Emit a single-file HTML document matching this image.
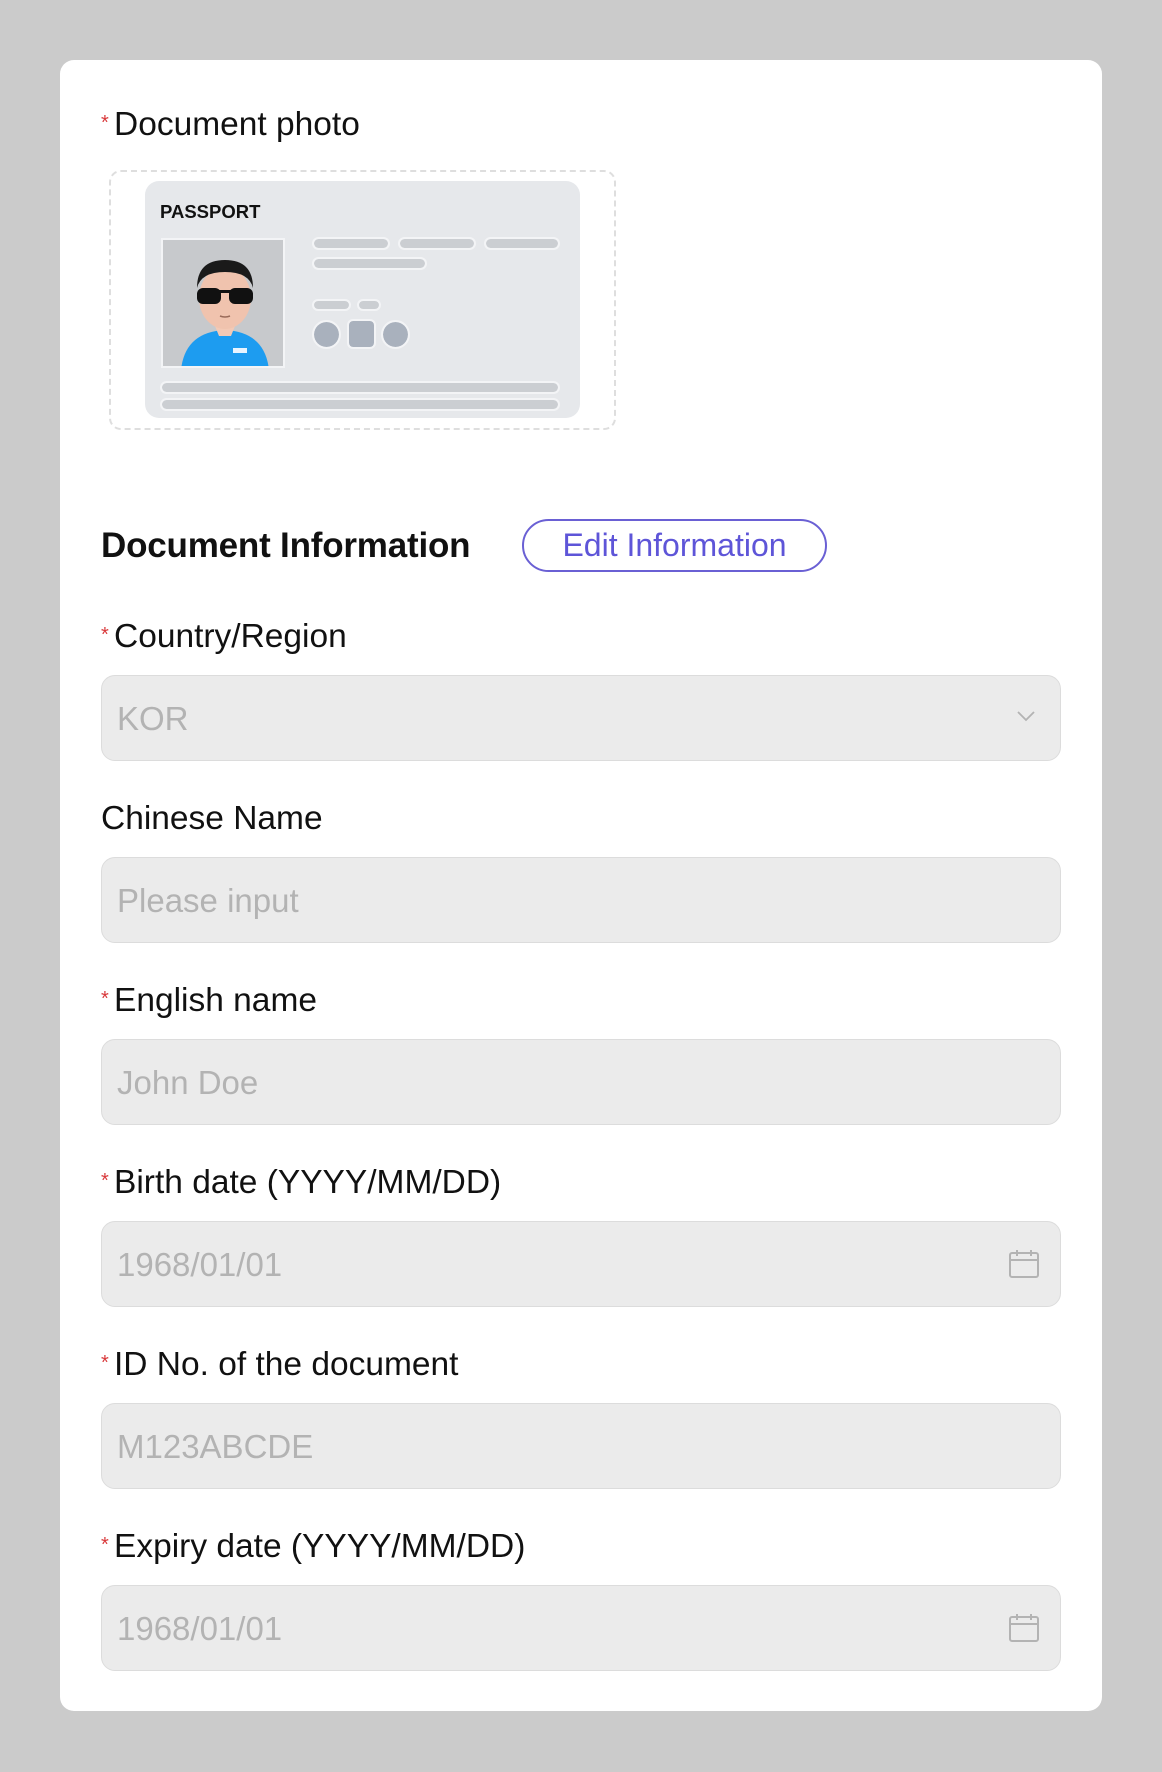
<!DOCTYPE html>
<html><head><meta charset="utf-8"><style>
*{margin:0;padding:0;box-sizing:border-box}
body{width:1162px;height:1772px;background:#cbcbcb;font-family:"Liberation Sans",sans-serif;position:relative;overflow:hidden}
.card{position:absolute;left:60px;top:60px;width:1042px;height:1651px;background:#fff;border-radius:14px}
.abs{position:absolute}
.lbl{position:absolute;left:114px;font-size:33.5px;color:#111;line-height:40px}
.req::before{content:"*";color:#d9383a;font-size:20px;position:absolute;left:-13px;top:-2px}
.inp{position:absolute;left:101px;width:960px;height:86px;background:#ebebeb;border:1.5px solid #dcdcdc;border-radius:14px;font-size:33px;color:#b3b3b3;padding-left:15px;line-height:86px}
.bar{position:absolute;background:#cbced2;border-radius:5px;height:9px;outline:2px solid #f3f4f6}
</style></head><body>
<div class="card"></div>
<div class="lbl req" style="top:105px">Document photo</div>
<div class="abs" style="left:109px;top:170px;width:507px;height:260px;border:2px dashed #dedede;border-radius:12px"></div>
<div class="abs" style="left:145px;top:181px;width:435px;height:237px;background:#e6e8eb;border-radius:14px"></div>
<div class="abs" style="left:160px;top:201px;font-size:18.5px;font-weight:bold;color:#111">PASSPORT</div>
<div class="abs" style="left:161px;top:238px;width:124px;height:130px;background:#c7c9cc;border:2px solid #f3f4f6;overflow:hidden">
<svg width="124" height="130" viewBox="0 0 124 130">
<path d="M18 130 Q22 92 62 90 Q102 92 106 130Z" fill="#1d9cf0"/>
<rect x="70" y="108" width="14" height="5" fill="#e8f4ff"/>
<path d="M52 86 L72 86 L68 96 L56 96Z" fill="#f3c9b5"/>
<ellipse cx="62" cy="58" rx="26" ry="31" fill="#f0c3ae"/>
<path d="M34 48 Q34 20 62 20 Q90 20 90 48 Q86 32 62 32 Q38 32 34 48Z" fill="#1a1a1a"/>
<rect x="34" y="48" width="24" height="16" rx="6" fill="#111"/>
<rect x="66" y="48" width="24" height="16" rx="6" fill="#111"/>
<rect x="56" y="50" width="12" height="3" fill="#111"/>
<path d="M57 76 Q62 78 67 76" stroke="#9a6b5a" stroke-width="1.5" fill="none"/>
</svg></div>
<div class="bar" style="left:314px;top:239px;width:74px"></div>
<div class="bar" style="left:400px;top:239px;width:74px"></div>
<div class="bar" style="left:486px;top:239px;width:72px"></div>
<div class="bar" style="left:314px;top:259px;width:111px"></div>
<div class="bar" style="left:314px;top:301px;width:35px;height:8px"></div>
<div class="bar" style="left:359px;top:301px;width:20px;height:8px"></div>
<div class="abs" style="left:314px;top:322px;width:25px;height:25px;border-radius:50%;background:#a9b1bd;outline:2px solid #f3f4f6"></div>
<div class="abs" style="left:349px;top:321px;width:25px;height:26px;border-radius:4px;background:#a9b1bd;outline:2px solid #f3f4f6"></div>
<div class="abs" style="left:383px;top:322px;width:25px;height:25px;border-radius:50%;background:#a9b1bd;outline:2px solid #f3f4f6"></div>
<div class="bar" style="left:162px;top:383px;width:396px"></div>
<div class="bar" style="left:162px;top:400px;width:396px"></div>

<div class="abs" style="left:101px;top:526px;font-size:35px;font-weight:bold;color:#111;line-height:40px;letter-spacing:-0.2px">Document Information</div>
<div class="abs" style="left:522px;top:519px;width:305px;height:53px;border:2px solid #6a60d4;border-radius:27px;color:#5e55d8;font-size:32px;text-align:center;line-height:49px">Edit Information</div>

<div class="lbl req" style="top:617px">Country/Region</div>
<div class="inp" style="top:675px">KOR
<svg class="abs" style="right:24px;top:34px" width="20" height="12" viewBox="0 0 20 12"><path d="M2 2 L10 10 L18 2" stroke="#b3b3b3" stroke-width="1.8" fill="none"/></svg></div>

<div class="lbl" style="left:101px;top:799px">Chinese Name</div>
<div class="inp" style="top:857px">Please input</div>

<div class="lbl req" style="top:981px">English name</div>
<div class="inp" style="top:1039px">John Doe</div>

<div class="lbl req" style="top:1163px">Birth date (YYYY/MM/DD)</div>
<div class="inp" style="top:1221px">1968/01/01
<svg class="abs" style="right:20px;top:26px" width="32" height="32" viewBox="0 0 32 32"><rect x="2" y="5" width="28" height="24" rx="2" stroke="#b3b3b3" stroke-width="2" fill="none"/><path d="M2 12 H30 M9 2 V8 M23 2 V8" stroke="#b3b3b3" stroke-width="2"/></svg></div>

<div class="lbl req" style="top:1345px">ID No. of the document</div>
<div class="inp" style="top:1403px">M123ABCDE</div>

<div class="lbl req" style="top:1527px">Expiry date (YYYY/MM/DD)</div>
<div class="inp" style="top:1585px">1968/01/01
<svg class="abs" style="right:20px;top:26px" width="32" height="32" viewBox="0 0 32 32"><rect x="2" y="5" width="28" height="24" rx="2" stroke="#b3b3b3" stroke-width="2" fill="none"/><path d="M2 12 H30 M9 2 V8 M23 2 V8" stroke="#b3b3b3" stroke-width="2"/></svg></div>
</body></html>
